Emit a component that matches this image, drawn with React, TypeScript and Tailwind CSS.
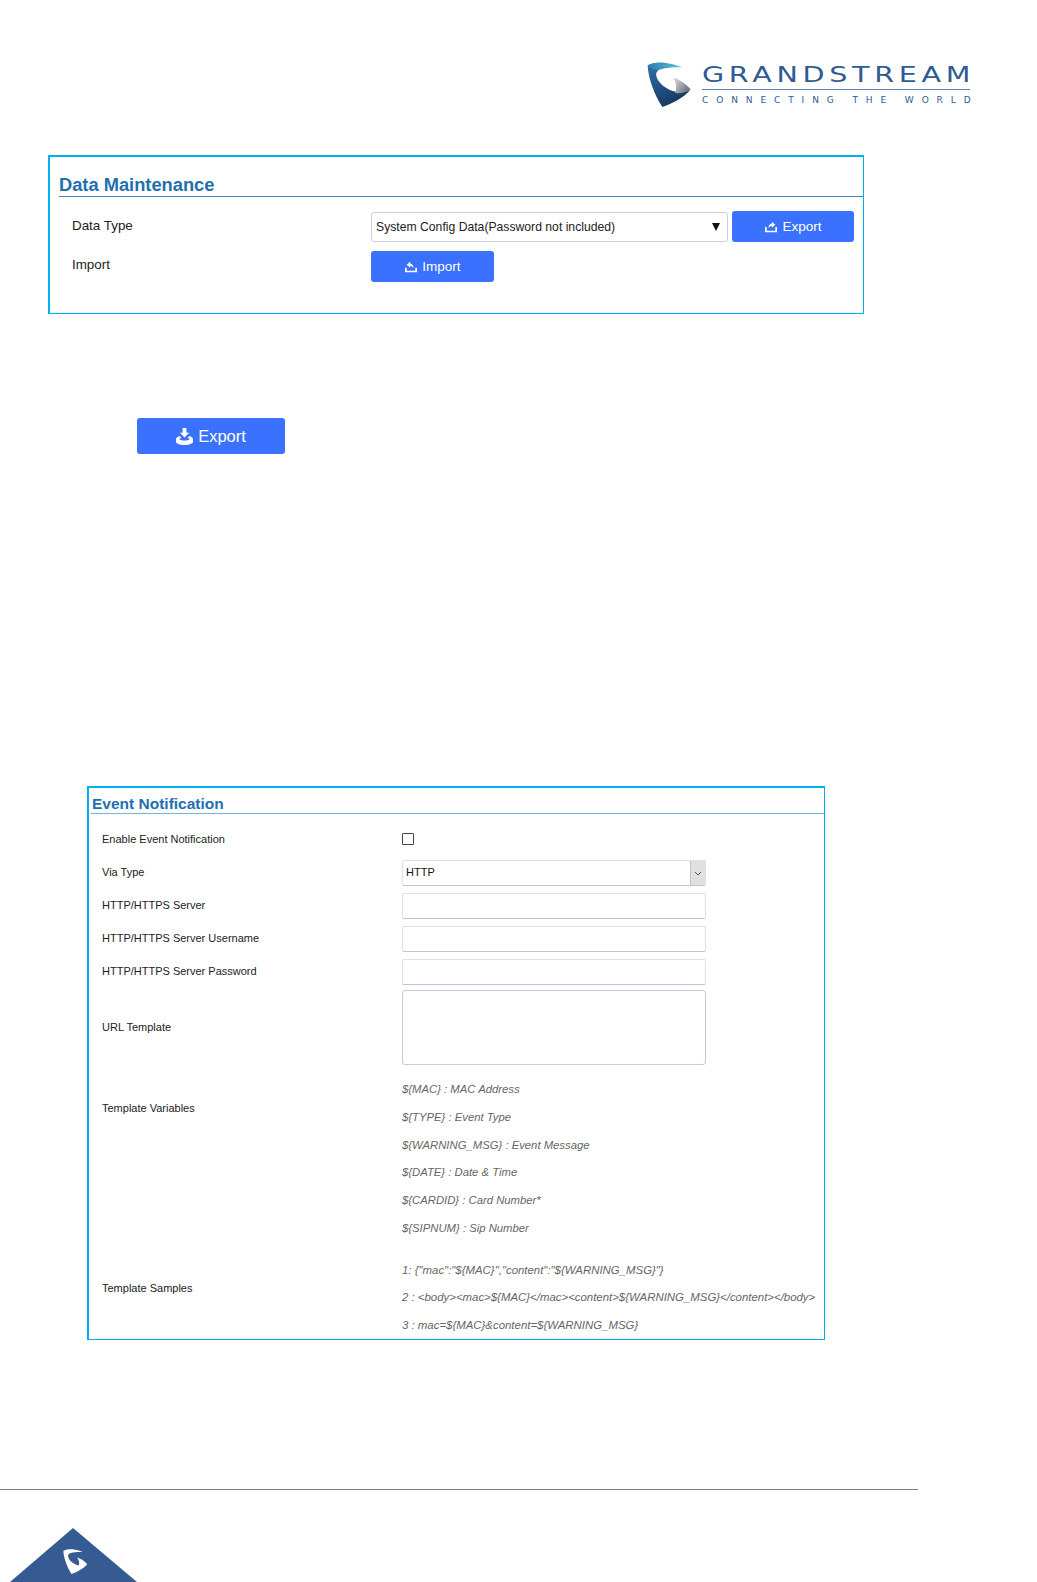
const sans = "font-['Liberation_Sans',Arial,sans-serif]";

const LogoMark = ({ className, mono }: { className: string; mono?: boolean }) => (
  <svg viewBox="0 0 135 135" className={className}>
    <defs>
      <linearGradient id="gsTop" x1="0" y1="0" x2="1" y2="0">
        <stop offset="0" stopColor="#2a7fae" />
        <stop offset="1" stopColor="#5cc2d8" />
      </linearGradient>
      <linearGradient id="gsBody" x1="0" y1="0" x2="0.6" y2="1">
        <stop offset="0" stopColor="#2f6fa8" />
        <stop offset="1" stopColor="#16365f" />
      </linearGradient>
      <linearGradient id="gsGrey" x1="0" y1="0" x2="1" y2="0.6">
        <stop offset="0" stopColor="#e6e8ea" />
        <stop offset="1" stopColor="#6d7278" />
      </linearGradient>
    </defs>
    <path
      d="M2 10 C3 50 25 105 46 135 C72 127 108 108 130 84 C112 92 95 93 80 88 C55 80 32 62 28 42 C26 30 32 24 42 20 C30 20 14 18 2 10Z"
      fill={mono ? "#ffffff" : "url(#gsBody)"}
    />
    <path
      d="M2 10 C10 4 30 0 52 2 C72 4 90 10 106 16 C85 15 62 16 42 22 C28 26 12 22 2 10Z"
      fill={mono ? "#ffffff" : "url(#gsTop)"}
    />
    <path
      d="M76 46 C92 50 115 64 131 82 C118 92 100 96 84 92 C90 78 88 60 76 46Z"
      fill={mono ? "#ffffff" : "url(#gsGrey)"}
    />
  </svg>
);

const UploadIcon = () => (
  <svg viewBox="0 0 16 14" className="h-[12px] w-[14px]" fill="#ffffff">
    <path d="M1 7h2v4.500h10V7h2v6H1z" />
    <path d="M9 1l4 3.400L9 7.800V5.800C7 5.800 5.800 6.600 5 8.400 5 5.200 6.600 3.400 9 3z" />
  </svg>
);

const ImportIcon = () => (
  <svg viewBox="0 0 16 14" className="h-[12px] w-[14px]" fill="#ffffff">
    <path d="M1 8h2v3.500h10V8h2v5H1z" />
    <path d="M7 1L3 4.400 7 7.800V5.800c2 0 3.200.8 4 2.600 0-3.200-1.600-5-4-5.400z" />
  </svg>
);

const DownloadIcon = () => (
  <svg viewBox="0 0 18 18" className="h-[17px] w-[17px]" fill="#ffffff">
    <path d="M7 0h4v5h3l-5 5-5-5h3z" />
    <path d="M3.500 8.500L6 10.500c-1.500.3-2.500.7-2.500 1.200C3.500 12.600 6 13.300 9 13.300s5.500-.7 5.500-1.600c0-.5-1-.9-2.500-1.200l2.500-2c2 .8 3.500 2 3.500 3.400v2.600c0 1.800-4 3.500-9 3.500s-9-1.700-9-3.500v-2.600c0-1.400 1.500-2.600 3.500-3.400z" />
  </svg>
);

const variables = [
  "${MAC} : MAC Address",
  "${TYPE} : Event Type",
  "${WARNING_MSG} : Event Message",
  "${DATE} : Date & Time",
  "${CARDID} : Card Number*",
  "${SIPNUM} : Sip Number",
];

const samples = [
  '1: {"mac":"${MAC}","content":"${WARNING_MSG}"}',
  "2 : <body><mac>${MAC}</mac><content>${WARNING_MSG}</content></body>",
  "3 : mac=${MAC}&content=${WARNING_MSG}",
];

const fieldClass =
  "h-[26px] w-[304px] rounded-[2px] border border-[#dde0e8] border-b-[#bcc5d4]";

const EventRow = ({ label, children }: { label: string; children: React.ReactNode }) => (
  <div className="grid h-[26px] grid-cols-[300px_1fr] items-center">
    <span className="-mt-[2px] text-[11px] text-[#222222]">{label}</span>
    {children}
  </div>
);

export default function App() {
  return (
    <div className={`h-[1582px] w-[1037px] overflow-hidden bg-white ${sans}`}>
      <header className="flex h-[155px] items-start pl-[647px] pt-[62px]">
        <LogoMark className="h-[45px] w-[45px]" />
        <div className="ml-[10px] flex w-[268px] flex-col font-['DejaVu_Sans',sans-serif] text-[#2f5a94]">
          <div className="origin-left scale-x-[1.3] whitespace-nowrap text-[22px] leading-[26px] tracking-[3.6px]">GRANDSTREAM</div>
          <div className="mt-[1px] h-px bg-[#5b7fb0]" />
          <div className="mt-[5px] whitespace-nowrap text-[9px] leading-[10px] tracking-[7.9px]">CONNECTING THE WORLD</div>
        </div>
      </header>

      <section className="ml-[48px] h-[159px] w-[816px] border-t-2 border-r border-b border-l-2 border-[#00b0f0]">
        <h2 className="ml-[9px] mt-[17px] h-[23px] border-b border-[#3f86bb] text-[18.3px] font-bold leading-[21px] text-[#1f6fb0]">
          Data Maintenance
        </h2>
        <div className="ml-[22px] mt-[15px] flex flex-col gap-[9px]">
          <div className="flex h-[31px]">
            <span className="w-[299px] pt-[4px] text-[13.4px] leading-[20px] text-[#222222]">Data Type</span>
            <div className="flex h-[30px] w-[357px] items-center justify-between rounded-[3px] border border-[#c9d0de] pl-[4px] pr-[7px] text-[12.2px] text-[#222222]">
              <span>System Config Data(Password not included)</span>
              <svg viewBox="0 0 8 8" className="mb-[1px] h-[8px] w-[8px]"><path d="M0 0h8L4 8z" fill="#111111" /></svg>
            </div>
            <button className="-mt-px ml-[4px] flex h-[31px] w-[122px] items-center justify-center gap-[4px] rounded-[3px] bg-[#3a71ff] pt-[1px] text-[13.5px] text-white">
              <UploadIcon />
              Export
            </button>
          </div>
          <div className="flex h-[31px]">
            <span className="w-[299px] pt-[3px] text-[13.4px] leading-[20px] text-[#222222]">Import</span>
            <button className="-mt-px flex h-[31px] w-[123px] items-center justify-center gap-[4px] rounded-[3px] bg-[#3a71ff] pt-[1px] text-[13.5px] text-white">
              <ImportIcon />
              Import
            </button>
          </div>
        </div>
      </section>

      <button className="ml-[137px] mt-[104px] flex h-[36px] w-[148px] items-center justify-center gap-[5px] rounded-[3px] bg-[#3a71ff] pt-[1px] text-[16.5px] text-white">
        <DownloadIcon />
        Export
      </button>

      <section className="ml-[87px] mt-[332px] h-[554px] w-[738px] border-t-2 border-r border-b border-l-2 border-[#00b0f0]">
        <h2 className="ml-[2px] h-[26px] border-b border-[#72b4e0] pl-[1px] pt-[6px] text-[15.5px] font-bold leading-[19px] text-[#1f6fb0]">
          Event Notification
        </h2>
        <div className="ml-[13px] mt-[13px] flex flex-col gap-[7px]">
          <EventRow label="Enable Event Notification">
            <span className="-mt-[2px] h-[12px] w-[12px] rounded-[1px] border border-[#444444]" />
          </EventRow>
          <EventRow label="Via Type">
            <div className={`${fieldClass} flex items-center justify-between overflow-hidden pl-[3px] text-[11px] text-[#111111]`}>
              <span className="-mt-[2px]">HTTP</span>
              <span className="flex h-full w-[15px] items-center justify-center border-l border-[#c4c4c4] bg-[#e0e0e0]">
                <svg viewBox="0 0 8 5" className="h-[5px] w-[8px]" fill="none" stroke="#555555"><path d="M1 1l3 3 3-3" /></svg>
              </span>
            </div>
          </EventRow>
          <EventRow label="HTTP/HTTPS Server"><div className={fieldClass} /></EventRow>
          <EventRow label="HTTP/HTTPS Server Username"><div className={fieldClass} /></EventRow>
          <EventRow label="HTTP/HTTPS Server Password"><div className={fieldClass} /></EventRow>
        </div>
        <div className="ml-[13px] mt-[5px] grid h-[75px] grid-cols-[300px_1fr] items-center">
          <span className="-mt-[1px] text-[11px] text-[#222222]">URL Template</span>
          <div className="h-[75px] w-[304px] rounded-[3px] border border-[#c5ccd8]" />
        </div>
        <div className="ml-[13px] mt-[11px] grid grid-cols-[300px_1fr] items-start">
          <span className="mt-[24px] text-[11px] leading-[16px] text-[#222222]">Template Variables</span>
          <div className="flex flex-col text-[11.3px] italic leading-[27.8px] text-[#666666]">
            {variables.map((v) => (
              <span key={v}>{v}</span>
            ))}
          </div>
        </div>
        <div className="ml-[13px] mt-[14px] grid grid-cols-[300px_1fr] items-start">
          <span className="mt-[23px] text-[11px] leading-[16px] text-[#222222]">Template Samples</span>
          <div className="flex flex-col whitespace-nowrap text-[11.42px] italic leading-[27.5px] text-[#666666]">
            {samples.map((s) => (
              <span key={s}>{s}</span>
            ))}
          </div>
        </div>
      </section>

      <footer className="mt-[149px]">
        <div className="h-px w-[918px] bg-[#808080]" />
        <div className="relative ml-[10px] mt-[38px] h-[54px] w-[127px] overflow-hidden">
          <svg viewBox="0 0 127 54" className="h-[54px] w-[127px]"><path d="M63 0L127 54H0z" fill="#365b92" /></svg>
          <LogoMark mono className="absolute left-[52px] top-[21px] h-[25px] w-[27px]" />
        </div>
      </footer>
    </div>
  );
}
